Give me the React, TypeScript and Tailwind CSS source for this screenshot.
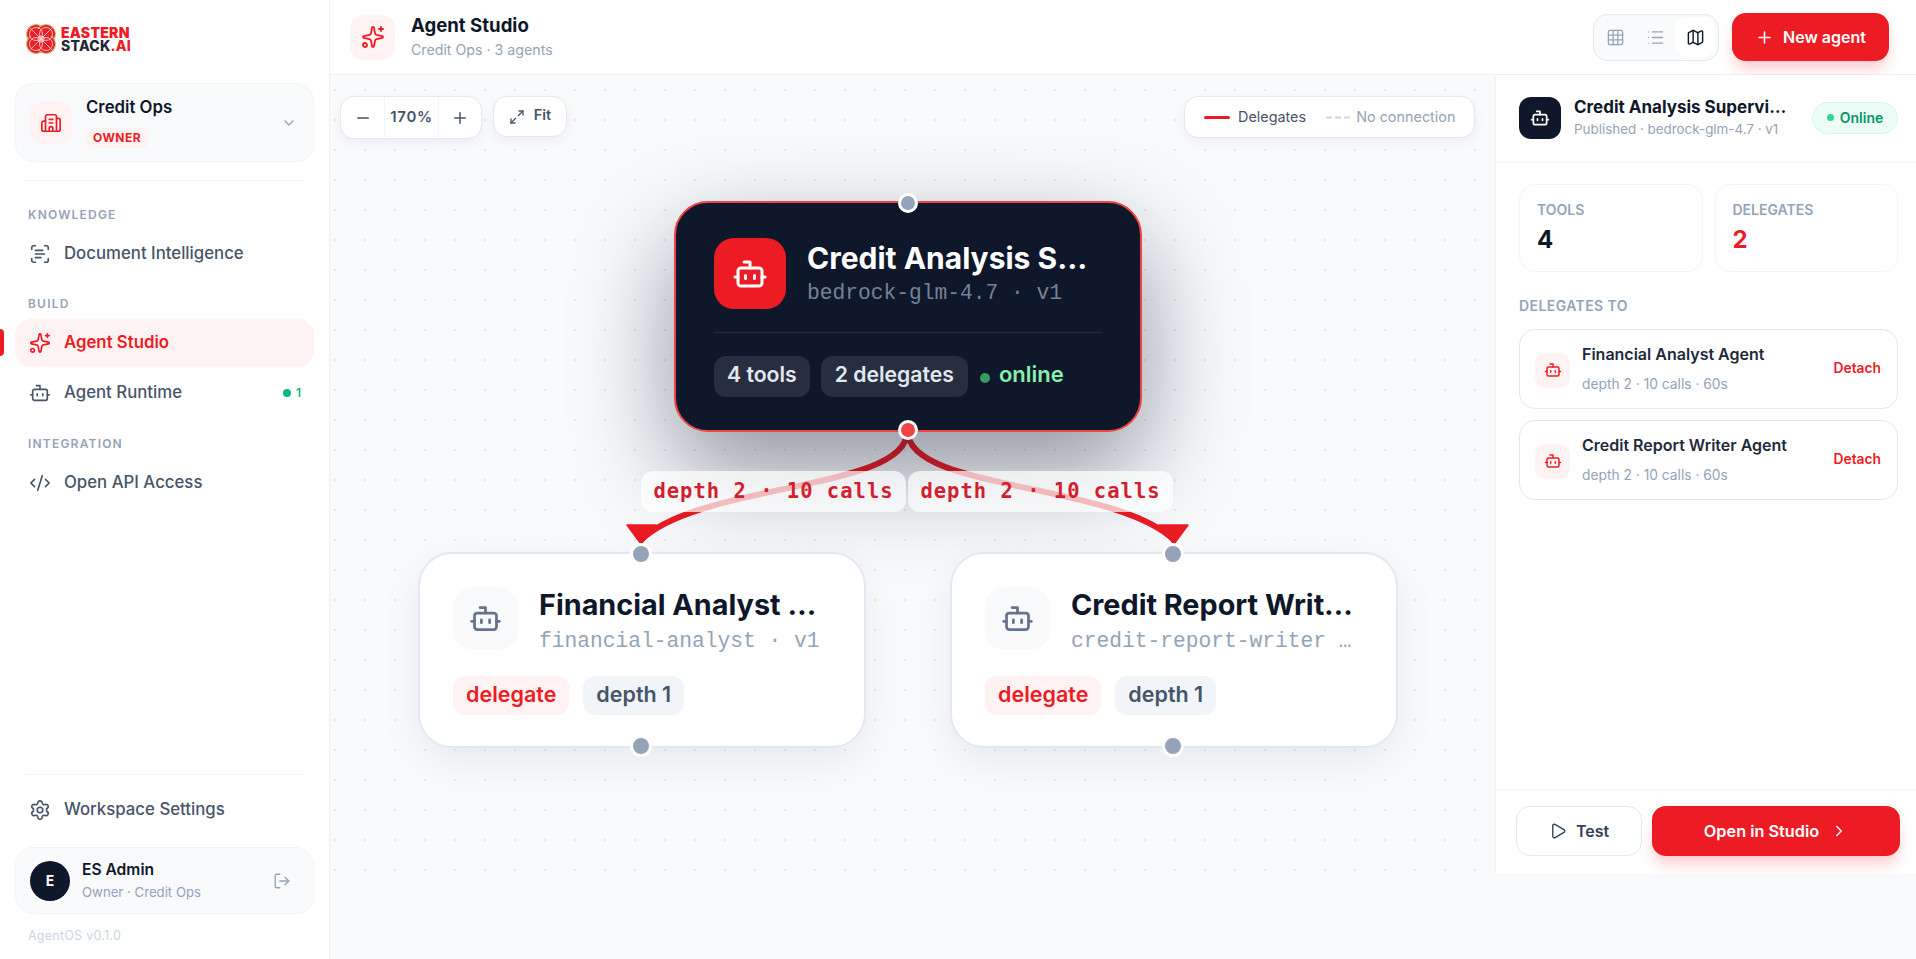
import React from "react";
import { Bot, Building2, ChevronDown, ChevronRight, CodeXml, Grid3x3, List, LogOut, Map, Maximize2, Minus, Play, Plus, ScanText, Settings, Sparkles } from "lucide-react";

function Logo() {
  return (
    <div className="flex items-center gap-[3px]">
      <svg width="34" height="34" viewBox="0 0 34 34" fill="none">
        <g stroke="#d9b36c" strokeWidth="1.1" fill="#e8202a">
          <circle cx="12" cy="12" r="9.5" />
          <circle cx="22" cy="12" r="9.5" />
          <circle cx="12" cy="22" r="9.5" />
          <circle cx="22" cy="22" r="9.5" />
        </g>
        <rect x="7" y="7" width="20" height="20" fill="#e8202a" />
        <g stroke="#fff" strokeWidth="0.8" fill="none" opacity="0.85">
          <circle cx="12" cy="12" r="6.5" />
          <circle cx="22" cy="12" r="6.5" />
          <circle cx="12" cy="22" r="6.5" />
          <circle cx="22" cy="22" r="6.5" />
          <path d="M6 6L28 28M28 6L6 28" />
          <circle cx="17" cy="17" r="3" />
        </g>
      </svg>
      <div className="font-black text-[14px] leading-[13px] tracking-[0.25px]">
        <div className="text-[#ed1c24]">EASTERN</div>
        <div className="text-[#1f2937] font-extrabold">STACK<span className="text-[#ed1c24]">.AI</span></div>
      </div>
    </div>
  );
}

function Section({ children, className = "" }: { children: React.ReactNode; className?: string }) {
  return <div className={"px-[28px] text-[12px] leading-4 font-semibold tracking-[0.1em] text-[#94a3b8] " + className}>{children}</div>;
}

function NavItem({ icon, label, active, extra }: { icon: React.ReactNode; label: string; active?: boolean; extra?: React.ReactNode }) {
  return (
    <div className={"relative mx-[15px] h-[48px] flex items-center gap-[13px] px-[14px] rounded-[16px] text-[16.8px] " + (active ? "bg-[#fef2f2] text-[#ed1c24] font-semibold" : "text-[#475569] font-medium")}>
      {active && <div className="absolute left-[-15px] top-[10px] w-[4px] h-[27px] bg-[#ed1c24] rounded-r-[4px]" />}
      {icon}
      <span className="flex-1">{label}</span>
      {extra}
    </div>
  );
}

function Sidebar() {
  return (
    <aside className="w-[330px] shrink-0 h-[959px] bg-white border-r border-[#eef2f6] flex flex-col">
      <div className="h-[83px] pl-[24px] pt-[22px]"><Logo /></div>
      <div className="mx-[15px] h-[79px] rounded-[18px] border border-[#f1f5f9] bg-[#f8fafc] flex items-center pl-[14px] pr-[16px] gap-[14px]">
        <div className="w-[42px] h-[43px] rounded-[14px] bg-[#fef2f2] flex items-center justify-center text-[#ed1c24]"><Building2 size={22} strokeWidth={1.8} /></div>
        <div className="flex-1">
          <div className="text-[16.8px] leading-5 font-semibold text-[#0f172a] mt-[-1px]">Credit Ops</div>
          <div className="mt-[11px] flex w-fit rounded-[7px] bg-[#fef2f2] px-[7px] text-[12px] leading-[20px] font-bold tracking-[0.04em] text-[#ed1c24]">OWNER</div>
        </div>
        <ChevronDown size={16} className="text-[#94a3b8]" />
      </div>
      <div className="mx-[25px] mt-[18px] h-px bg-[#f1f5f9]" />
      <Section className="mt-[26px] mb-[7px]">KNOWLEDGE</Section>
      <NavItem icon={<ScanText size={22} strokeWidth={1.8} />} label="Document Intelligence" />
      <Section className="mt-[18px] mb-[7px]">BUILD</Section>
      <NavItem active icon={<Sparkles size={22} strokeWidth={1.8} />} label="Agent Studio" />
      <div className="h-[1.5px]" />
      <NavItem icon={<Bot size={22} strokeWidth={1.8} />} label="Agent Runtime" extra={
        <span className="flex items-center gap-[5px] text-[12px] font-semibold text-[#10b981] mr-[-1px]"><span className="w-[8px] h-[8px] rounded-full bg-[#10b981]" />1</span>
      } />
      <Section className="mt-[19px] mb-[7px]">INTEGRATION</Section>
      <NavItem icon={<CodeXml size={22} strokeWidth={1.8} />} label="Open API Access" />
      <div className="flex-1" />
      <div className="mx-[25px] h-px bg-[#f1f5f9] mb-[11px]" />
      <NavItem icon={<Settings size={22} strokeWidth={1.8} />} label="Workspace Settings" />
      <div className="mx-[15px] mt-[13px] h-[67px] rounded-[18px] border border-[#f1f5f9] bg-[#f8fafc] flex items-center pl-[14px] pr-[22px] gap-[12px]">
        <div className="w-[40px] h-[40px] rounded-full bg-[#0f172a] text-white flex items-center justify-center text-[14px] font-bold">E</div>
        <div className="flex-1">
          <div className="text-[15.6px] leading-5 font-semibold text-[#0f172a] mt-[-2px]">ES Admin</div>
          <div className="mt-[4px] text-[13.2px] leading-4 text-[#94a3b8]">Owner · Credit Ops</div>
        </div>
        <LogOut size={18} strokeWidth={1.8} className="text-[#94a3b8]" />
      </div>
      <div className="h-[45px] pl-[28px] pt-[14px] text-[12.5px] leading-4 tracking-[0.02em] text-[#cbd5e1]">AgentOS v0.1.0</div>
    </aside>
  );
}

function Header() {
  return (
    <header className="h-[75px] shrink-0 bg-white border-b border-[#eef2f6] flex items-center pl-[20px] pr-[27px]">
      <div className="w-[45px] h-[45px] rounded-[14px] bg-[#fef2f2] flex items-center justify-center text-[#ed1c24]"><Sparkles size={24} strokeWidth={1.8} /></div>
      <div className="ml-[16px] flex-1">
        <div className="text-[18.6px] leading-[25px] font-bold text-[#0f172a] mt-[-2px]">Agent Studio</div>
        <div className="text-[14.2px] leading-5 mt-[2px] text-[#94a3b8]">Credit Ops · 3 agents</div>
      </div>
      <div className="w-[126px] h-[47px] rounded-[14px] border border-[#e2e8f0] bg-[#f8fafc] flex items-center pl-[2px] pr-[3px] justify-between">
        <div className="w-[40px] flex justify-center text-[#94a3b8]"><Grid3x3 size={19} strokeWidth={1.6} /></div>
        <div className="w-[40px] flex justify-center text-[#94a3b8]"><List size={19} strokeWidth={1.6} /></div>
        <div className="w-[40px] h-[40px] rounded-[12px] bg-white flex items-center justify-center text-[#0f172a]"><Map size={19} strokeWidth={1.8} /></div>
      </div>
      <div className="ml-[13px] w-[157px] h-[48px] rounded-[14px] bg-[#ed1c24] text-white text-[16px] font-semibold flex items-center justify-center gap-[9px] shadow-[0_10px_15px_-3px_rgba(237,28,36,0.25)]">
        <Plus size={19} strokeWidth={2} />New agent
      </div>
    </header>
  );
}

function Handle({ className }: { className: string }) {
  return <div className={"absolute rounded-full border-[3px] border-white z-20 " + className} />;
}

function ChildNode({ x, title, sub }: { x: string; title: string; sub: string }) {
  return (
    <div className={"absolute top-[477px] w-[448px] h-[196px] rounded-[34px] border-2 border-[#e2e8f0] bg-white shadow-[0_14px_40px_rgba(15,23,42,0.07)] px-[33px] pt-[33px] " + x}>
      <div className="flex items-start gap-[21px]">
        <div className="w-[65px] h-[63px] shrink-0 rounded-[20px] bg-[#f8fafc] flex items-center justify-center text-[#64748b]"><Bot size={33} strokeWidth={2} /></div>
        <div className="min-w-0 flex-1 mt-[-1px]">
          <div className="truncate text-[28.8px] leading-[38px] font-bold text-[#0f172a]">{title}</div>
          <div className="truncate mt-[2px] font-['Liberation_Mono',monospace] text-[21.25px] leading-[30px] text-[#94a3b8]">{sub}</div>
        </div>
      </div>
      <div className="mt-[20px] flex gap-[14px] text-[21.5px] font-semibold">
        <span className="h-[39px] leading-[37px] rounded-[12px] bg-[#fef2f2] text-[#ed1c24] px-[13px]">delegate</span>
        <span className="h-[39px] leading-[37px] rounded-[12px] bg-[#f1f5f9] text-[#475569] px-[13px]">depth 1</span>
      </div>
      <Handle className="left-[210px] top-[-11px] w-[22px] h-[22px] bg-[#94a3b8]" />
      <Handle className="left-[210px] bottom-[-11px] w-[22px] h-[22px] bg-[#94a3b8]" />
    </div>
  );
}

function Canvas() {
  return (
    <div className="relative flex-1 min-w-0 overflow-hidden bg-[#f8fafc] bg-[radial-gradient(circle,#e2e8f0_1px,transparent_1.2px)] bg-[size:30px_30px] bg-[position:-10px_0px]">
      <svg className="absolute left-0 top-0" width="1165" height="799" viewBox="0 0 1165 799" fill="none">
        <path d="M577 357C577 415 370 408 311 465" stroke="#ed1c24" strokeWidth="6" />
        <path d="M578 357C578 415 785 408 844 465" stroke="#ed1c24" strokeWidth="6" />
        <path d="M297 450H326L311 469Z" fill="#ed1c24" stroke="#ed1c24" strokeWidth="1.5" strokeLinejoin="round" />
        <path d="M829 450H858L844 469Z" fill="#ed1c24" stroke="#ed1c24" strokeWidth="1.5" strokeLinejoin="round" />
      </svg>

      <div className="absolute left-[344px] top-[126px] w-[468px] h-[231px] rounded-[34px] border-2 border-[#ef4444] bg-[#0f172a] shadow-[0_40px_100px_rgba(15,23,42,0.45)] px-[38px] pt-[35px]">
        <div className="flex items-center gap-[21px]">
          <div className="w-[72px] h-[71px] shrink-0 rounded-[20px] bg-[#ed1c24] flex items-center justify-center text-white"><Bot size={36} strokeWidth={2} /></div>
          <div className="min-w-0 flex-1">
            <div className="truncate text-[30px] leading-[36px] font-bold text-white">Credit Analysis Supervisor Agent</div>
            <div className="truncate mt-[2px] font-['Liberation_Mono',monospace] text-[21.25px] leading-[30px] text-[#748299]">bedrock-glm-4.7 · v1</div>
          </div>
        </div>
        <div className="mt-[23px] h-px bg-white/10" />
        <div className="mt-[23px] flex items-center text-[21.2px] h-[41px] font-semibold">
          <span className="h-[41px] rounded-[12px] bg-white/10 text-[#e2e8f0] px-[13px] leading-[37px]">4 tools</span>
          <span className="ml-[11px] h-[41px] rounded-[12px] bg-white/10 text-[#e2e8f0] px-[14px] leading-[37px]">2 delegates</span>
          <span className="ml-[12px] w-[10px] h-[10px] mt-[2px] rounded-full bg-[#3a9d60]" />
          <span className="ml-[9px] text-[22px] leading-[36px] mb-[5px] text-[#86efac]">online</span>
        </div>
        <Handle className="left-[222px] top-[-10px] w-5 h-5 bg-[#94a3b8]" />
        <Handle className="left-[222px] bottom-[-10px] w-5 h-5 bg-[#ef4444]" />
      </div>

      <ChildNode x="left-[88px]" title="Financial Analyst Agent" sub="financial-analyst · v1" />
      <ChildNode x="left-[620px]" title="Credit Report Writer Agent" sub="credit-report-writer · v1" />

      <div className="absolute left-[311px] top-[396px] w-[265px] h-[41px] rounded-[12px] bg-white/70 flex items-center justify-center font-['DejaVu_Sans_Mono',monospace] text-[20.5px] tracking-[1px] font-bold text-[#d21f2d]">depth 2 · 10 calls</div>
      <div className="absolute left-[578px] top-[396px] w-[265px] h-[41px] rounded-[12px] bg-white/70 flex items-center justify-center font-['DejaVu_Sans_Mono',monospace] text-[20.5px] tracking-[1px] font-bold text-[#d21f2d]">depth 2 · 10 calls</div>

      <div className="absolute left-[10px] top-[21px] flex items-start gap-[11px]">
        <div className="h-[43px] w-[142px] rounded-[14px] border border-[#e2e8f0] bg-white shadow-[0_4px_12px_rgba(15,23,42,0.05)] flex items-center text-[#475569]">
          <div className="w-[43px] flex justify-center"><Minus size={18} /></div>
          <div className="w-[55px] h-full border-x border-[#f1f5f9] flex items-center justify-center text-[15px] font-semibold tracking-[0.05em]">170%</div>
          <div className="flex-1 flex justify-center"><Plus size={18} /></div>
        </div>
        <div className="h-[41px] w-[74px] rounded-[14px] border border-[#e2e8f0] bg-white shadow-[0_4px_12px_rgba(15,23,42,0.05)] flex items-center justify-center gap-[9px] text-[#475569] text-[14.5px] font-semibold">
          <Maximize2 size={16} /><span className="mt-[-3px]">Fit</span>
        </div>
      </div>

      <div className="absolute left-[854px] top-[21px] w-[291px] h-[42px] rounded-[14px] border border-[#e2e8f0] bg-white shadow-[0_4px_12px_rgba(15,23,42,0.05)] flex items-center pl-[19px] text-[14.4px] text-[#475569]">
        <span className="w-[26px] h-[3px] rounded-full bg-[#ed1c24]" />
        <span className="ml-[8px]">Delegates</span>
        <svg className="ml-[20px]" width="24" height="3"><path d="M0 1.5H24" stroke="#cbd5e1" strokeWidth="2" strokeDasharray="6 3" /></svg>
        <span className="ml-[6px] text-[#94a3b8]">No connection</span>
      </div>
    </div>
  );
}

function DelegateRow({ title }: { title: string }) {
  return (
    <div className="h-[80px] rounded-[16px] border border-[#e2e8f0] bg-white flex items-center pl-[15px] pr-[16px] gap-[12px]">
      <div className="w-[35px] h-[35px] rounded-[10px] bg-[#fef2f2] flex items-center justify-center text-[#ed1c24] mt-[2px]"><Bot size={18} strokeWidth={2} /></div>
      <div className="flex-1">
        <div className="text-[16px] leading-[22px] font-semibold text-[#1e293b] mt-[-1px]">{title}</div>
        <div className="mt-[9px] text-[13.8px] leading-5 text-[#94a3b8]">depth 2 · 10 calls · 60s</div>
      </div>
      <div className="text-[13.8px] font-semibold text-[#ed1c24] mt-[-1px]">Detach</div>
    </div>
  );
}

function Stat({ label, value, red }: { label: string; value: string; red?: boolean }) {
  return (
    <div className="flex-1 h-[88px] rounded-[16px] border border-[#f1f5f9] bg-white pl-[17px] pt-[15px]">
      <div className="text-[14px] leading-5 font-semibold text-[#94a3b8]">{label}</div>
      <div className={"mt-[4px] text-[24px] leading-8 font-bold " + (red ? "text-[#ed1c24]" : "text-[#0f172a]")}>{value}</div>
    </div>
  );
}

function Panel() {
  return (
    <aside className="w-[421px] shrink-0 bg-white border-l border-[#eef2f6] flex flex-col">
      <div className="h-[88px] shrink-0 border-b border-[#f1f5f9] flex items-center pl-[23px] pr-[18px] pb-[2px]">
        <div className="w-[42px] h-[42px] shrink-0 rounded-[12px] bg-[#0f172a] flex items-center justify-center text-white"><Bot size={20} strokeWidth={2} /></div>
        <div className="ml-[13px] min-w-0 flex-1">
          <div className="truncate text-[17px] leading-[22px] font-bold text-[#0f172a]">Credit Analysis Supervisor Agent</div>
          <div className="truncate text-[13.4px] leading-5 mt-[1px] text-[#94a3b8]">Published · bedrock-glm-4.7 · v1</div>
        </div>
        <div className="ml-[20px] shrink-0 w-[86px] h-[32px] rounded-full border border-[#d1fae5] bg-[#ecfdf5] flex items-center justify-center gap-[6px] text-[14px] font-semibold text-[#059669]">
          <span className="w-[7px] h-[7px] rounded-full bg-[#34d399]" />Online
        </div>
      </div>
      <div className="flex-1 px-[23px] pr-[18px] pt-[21px]">
        <div className="flex gap-[12px]">
          <Stat label="TOOLS" value="4" />
          <Stat label="DELEGATES" value="2" red />
        </div>
        <div className="mt-[24px] mb-[13px] text-[14px] leading-5 font-semibold tracking-[0.03em] text-[#94a3b8]">DELEGATES TO</div>
        <div className="flex flex-col gap-[11px]">
          <DelegateRow title="Financial Analyst Agent" />
          <DelegateRow title="Credit Report Writer Agent" />
        </div>
      </div>
      <div className="h-[85px] shrink-0 border-t border-[#f1f5f9] pl-[20px] pr-[16px] pt-[16px] flex gap-[10px]">
        <div className="w-[126px] h-[50px] rounded-[14px] border border-[#e2e8f0] bg-white flex items-center justify-center gap-[9px] text-[16px] font-semibold text-[#334155]"><Play size={18} strokeWidth={1.8} />Test</div>
        <div className="flex-1 h-[50px] rounded-[14px] bg-[#ed1c24] flex items-center justify-center gap-[11px] text-[16.3px] font-semibold text-white shadow-[0_10px_15px_-3px_rgba(237,28,36,0.25)]">Open in Studio<ChevronRight size={18} strokeWidth={2} /></div>
      </div>
    </aside>
  );
}

export default function App() {
  return (
    <div className="w-[1916px] h-[959px] overflow-hidden flex bg-[#f8fafc] font-['Inter',sans-serif]">
      <Sidebar />
      <div className="flex-1 min-w-0 h-[874px] flex flex-col">
        <Header />
        <div className="flex-1 min-h-0 flex">
          <Canvas />
          <Panel />
        </div>
      </div>
    </div>
  );
}
